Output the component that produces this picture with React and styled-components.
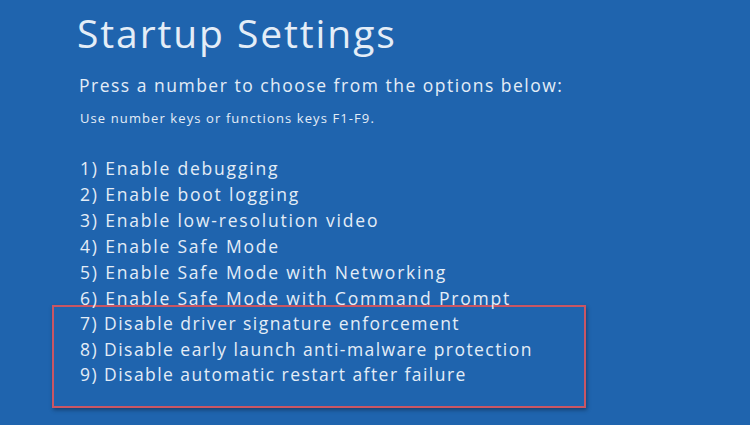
import React from 'react';
import styled, { createGlobalStyle } from 'styled-components';

const Global = createGlobalStyle`
  html, body {
    margin: 0;
    padding: 0;
    background: #1f64ae;
  }
`

const Screen = styled.div`
  width: 750px;
  height: 425px;
  overflow: hidden;
  background: #1f64ae;
  color: #e4edf7;
  font-family: "Open Sans", "Noto Sans", sans-serif;
  padding: 8px 0 0 77px;
  box-sizing: border-box;
`

const Title = styled.h1`
  font-size: 39px;
  font-weight: 400;
  line-height: 50px;
  margin: 0;
  letter-spacing: 1.9px;
`

const Prompt = styled.p`
  font-size: 17.5px;
  line-height: 22px;
  margin: 16px 0 0 2px;
  letter-spacing: 1.5px;
`

const Hint = styled.p`
  font-size: 13px;
  line-height: 18px;
  margin: 13px 0 0 3px;
  letter-spacing: 1.1px;
`

const List = styled.ul`
  list-style: none;
  margin: 28px 0 0 3px;
  padding: 0;
`

const Item = styled.li`
  font-size: 17.5px;
  line-height: ${p => p.$tight ? '25.5px' : '26px'};
  white-space: nowrap;
  letter-spacing: ${p => p.$tight ? '1.45px' : '1.8px'};
`

const Highlight = styled.div`
  width: 534px;
  margin: -6px 0 0 -28px;
  padding: 4px 0 18px 26px;
  box-sizing: border-box;
  border: 2px solid #c95664;
  box-shadow: 1px 2px 4px rgba(0, 0, 0, 0.35);
`

const options = [
  'Enable debugging',
  'Enable boot logging',
  'Enable low-resolution video',
  'Enable Safe Mode',
  'Enable Safe Mode with Networking',
  'Enable Safe Mode with Command Prompt',
]

const marked = [
  'Disable driver signature enforcement',
  'Disable early launch anti-malware protection',
  'Disable automatic restart after failure',
]

export default function App() {
  return (
    <Screen>
      <Global />
      <Title>Startup Settings</Title>
      <Prompt>Press a number to choose from the options below:</Prompt>
      <Hint>Use number keys or functions keys F1-F9.</Hint>
      <List>
        {options.map((o, i) => (
          <Item key={o}>{i + 1}) {o}</Item>
        ))}
        <Highlight>
          {marked.map((o, i) => (
            <Item key={o} $tight>{i + 7}) {o}</Item>
          ))}
        </Highlight>
      </List>
    </Screen>
  );
}
